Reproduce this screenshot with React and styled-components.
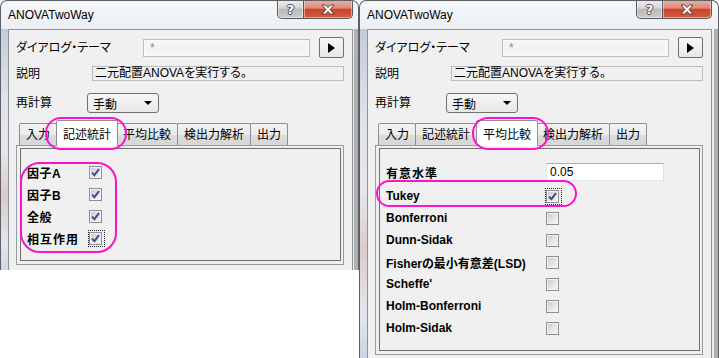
import React from 'react'
import styled, { createGlobalStyle } from 'styled-components'

const GlobalStyle = createGlobalStyle`
  html, body {
    margin: 0;
    padding: 0;
    background: #fff;
  }
  body {
    font-family: 'Liberation Sans', 'Noto Sans CJK JP', sans-serif;
    font-size: 12px;
    color: #000;
    font-feature-settings: 'palt';
  }
  * {
    box-sizing: border-box;
  }
`

const Page = styled.div`
  display: flex;
  align-items: flex-start;
  width: 719px;
  height: 358px;
  overflow: hidden;
`

const Window = styled.div`
  position: relative;
  flex: none;
  display: flex;
  flex-direction: column;
  width: ${p => p.$width}px;
  height: ${p => p.$height}px;
  padding: 0 ${p => p.$width - 354}px 0 7px;
  border: 1px solid #5d6166;
  border-bottom: none;
  border-radius: 7px 7px 0 0;
  overflow: hidden;
  background:
    linear-gradient(
        to bottom,
        #c3cbd9 0%,
        #dfe3ea 25%,
        #e7e7ea 45%,
        #dccacd 62%,
        #e3e6ec 80%,
        #bdc6dc 100%
      )
      left 0 top 28px / 7px 100% no-repeat,
    linear-gradient(#b0b0b0, #b0b0b0) right 0 top 28px / 4px 100% no-repeat,
    linear-gradient(to bottom, #f5f7f9 0, #eceff3 28px, #e9ecf0 100%);
`

const TitleBar = styled.div`
  display: flex;
  align-items: flex-start;
  height: 28px;
  flex: none;
`

const Title = styled.div`
  flex: 1;
  padding-top: 6px;
  line-height: 16px;
  font-size: 12px;
`

const CaptionButton = styled.div`
  width: ${p => p.$w}px;
  height: 19px;
  margin-top: -1px;
  display: flex;
  align-items: center;
  justify-content: center;
  border: 1px solid #55595e;
  border-top: none;
  border-left: ${p => (p.$close ? 'none' : '1px solid #55595e')};
  border-radius: ${p => (p.$close ? '0 0 5px 0' : '0 0 0 5px')};
  background: ${p =>
    p.$close
      ? 'linear-gradient(to bottom, #eab1a4 0%, #dc8a78 45%, #c9452c 52%, #d35a40 100%)'
      : 'linear-gradient(to bottom, #eeeeee 0%, #d6d6d6 45%, #b9b9b9 52%, #cdcdcd 100%)'};
  box-shadow: inset 0 0 0 1px rgba(255, 255, 255, 0.45);
`

const HelpGlyph = styled.span`
  font-family: 'DejaVu Sans', sans-serif;
  font-weight: bold;
  font-size: 13px;
  line-height: 13px;
  color: #fff;
  text-shadow: 1px 0 0 #4c4c4c, -1px 0 0 #4c4c4c, 0 1px 0 #4c4c4c, 0 -1px 0 #4c4c4c;
`

const Client = styled.div`
  flex: 1;
  display: flex;
  flex-direction: column;
  background: #f0f0f0;
  border: 1px solid #8d9298;
  border-bottom: none;
  padding: 7px 8px 0 7px;
`

const Row = styled.div`
  display: flex;
  align-items: center;
  height: ${p => p.$h}px;
  margin-top: ${p => p.$mt || 0}px;
`

const Label = styled.div`
  flex: none;
  width: ${p => p.$w}px;
  font-size: 12px;
  line-height: 16px;
  white-space: nowrap;
`

const ThemeInput = styled.div`
  flex: 1;
  height: 18px;
  padding-left: 6px;
  line-height: 16px;
  color: #8a8a8a;
  font-size: 12px;
  background: #f4f4f4;
  border: 1px solid #bdbdbd;
  box-shadow: inset 0 0 0 1px #fafafa;
`

const ArrowButton = styled.div`
  flex: none;
  width: 25px;
  height: 21px;
  margin-left: 9px;
  display: flex;
  align-items: center;
  justify-content: center;
  border: 1px solid #707070;
  border-radius: 2px;
  background: linear-gradient(to bottom, #f8f8f8, #e6e6e6);
`

const StaticField = styled.div`
  flex: 1;
  height: 15px;
  padding-left: 2px;
  line-height: 13px;
  font-size: 12px;
  border: 1px solid #bcbcbc;
  background: #f0f0f0;
  white-space: nowrap;
`

const Select = styled.div`
  flex: none;
  width: 72px;
  height: 20px;
  display: flex;
  align-items: center;
  justify-content: space-between;
  padding: 0 6px 0 5px;
  border: 1px solid #707070;
  border-radius: 3px;
  background: linear-gradient(to bottom, #f7f7f7, #e8e8e8);
  font-size: 12px;
`

const TabStrip = styled.div`
  display: flex;
  align-items: flex-end;
  height: 25px;
  margin-top: 7px;
  padding-left: 3px;
`

const Tab = styled.div`
  position: relative;
  flex: none;
  height: ${p => (p.$active ? 26 : 22)}px;
  margin: 0 ${p => (p.$active ? -1 : 0)}px ${p => (p.$active ? -1 : 0)}px -1px;
  padding: ${p => (p.$active ? 6 : 3)}px 6px 0;
  z-index: ${p => (p.$active ? 1 : 0)};
  font-size: 12px;
  line-height: 16px;
  white-space: nowrap;
  border: 1px solid #8c8e94;
  border-bottom: none;
  border-radius: 2px 2px 0 0;
  background: ${p =>
    p.$active ? '#ffffff' : 'linear-gradient(to bottom, #f3f3f3 0%, #ebebeb 50%, #dcdcdc 52%, #d6d6d6 100%)'};

  &:first-child {
    margin-left: 0;
  }
`

const Panel = styled.div`
  display: flex;
  height: ${p => p.$h}px;
  padding: 2px 2px 3px 3px;
  border: 1px solid #999a9e;
`

const Group = styled.div`
  flex: 1;
  display: flex;
  flex-direction: column;
  padding: 12px 0 0 6px;
  border: 1px solid #6f6f6f;
`

const OptionRow = styled.div`
  display: flex;
  align-items: center;
  height: 22px;
  margin-bottom: ${p => p.$mb || 0}px;
`

const OptionLabel = styled.div`
  flex: none;
  width: ${p => p.$w}px;
  font-weight: 700;
  font-size: 12px;
  letter-spacing: ${p => p.$ls || 0}px;
  white-space: nowrap;
`

const CheckBox = styled.div`
  position: relative;
  flex: none;
  width: 13px;
  height: 13px;
  border: 1px solid #8f8f8f;
  background: linear-gradient(135deg, #c4c8ce 0%, #e2e3e6 50%, #f7f7f7 100%);
  box-shadow: inset 0 0 0 1px #f3f3f3;

  &::after {
    content: '';
    display: ${p => (p.$focus ? 'block' : 'none')};
    position: absolute;
    top: -3px;
    left: -2px;
    right: -4px;
    bottom: -3px;
    border: 1px dotted #222;
  }
`

const ValueInput = styled.div`
  flex: none;
  width: 118px;
  height: 18px;
  padding-left: 3px;
  line-height: 16px;
  font-size: 12px;
  background: #fff;
  border: 1px solid;
  border-color: #abadb3 #dbdfe6 #e3e9ef #e2e3ea;
`

const Ring = styled.div`
  position: absolute;
  left: ${p => p.$x}px;
  top: ${p => p.$y}px;
  width: ${p => p.$w}px;
  height: ${p => p.$h}px;
  border: 2.5px solid #ff10cc;
  border-radius: ${p => p.$r}px;
  pointer-events: none;
  z-index: 5;
`

const TABS = ['入力', '記述統計', '平均比較', '検出力解析', '出力']

function Check({ checked, focus }) {
  return (
    <CheckBox $focus={focus}>
      {checked && (
        <svg width="11" height="11" viewBox="0 0 11 11" style={{ display: 'block' }}>
          <path d="M2 5.6 L4.4 8.2 L9 2.2" fill="none" stroke="#3d4f8f" strokeWidth="2" />
        </svg>
      )}
    </CheckBox>
  )
}

function CloseGlyph() {
  return (
    <svg width="14" height="11" viewBox="0 0 14 11">
      <path
        d="M1 1 H4.5 L7 3.6 L9.5 1 H13 L9 5.5 L13 10 H9.5 L7 7.4 L4.5 10 H1 L5 5.5 Z"
        fill="#fff"
        stroke="#4a3a36"
        strokeWidth="0.9"
        strokeLinejoin="round"
      />
    </svg>
  )
}

function Dialog({ width, height, active, panelHeight, rings, children }) {
  return (
    <Window $width={width} $height={height}>
      <TitleBar>
        <Title>ANOVATwoWay</Title>
        <CaptionButton $w={27}>
          <HelpGlyph>?</HelpGlyph>
        </CaptionButton>
        <CaptionButton $w={49} $close>
          <CloseGlyph />
        </CaptionButton>
      </TitleBar>
      <Client>
        <Row $h={21}>
          <Label $w={127}>ダイアログ・テーマ</Label>
          <ThemeInput>*</ThemeInput>
          <ArrowButton>
            <svg width="7" height="10" viewBox="0 0 7 10">
              <path d="M0 0 L7 5 L0 10 Z" fill="#000" />
            </svg>
          </ArrowButton>
        </Row>
        <Row $h={15} $mt={8}>
          <Label $w={76}>説明</Label>
          <StaticField>二元配置ANOVAを実行する。</StaticField>
        </Row>
        <Row $h={20} $mt={12}>
          <Label $w={71}>再計算</Label>
          <Select>
            <span>手動</span>
            <svg width="8" height="4" viewBox="0 0 8 4">
              <path d="M0 0 H8 L4 4 Z" fill="#000" />
            </svg>
          </Select>
        </Row>
        <TabStrip>
          {TABS.map(t => (
            <Tab key={t} $active={t === active}>
              {t}
            </Tab>
          ))}
        </TabStrip>
        <Panel $h={panelHeight}>
          <Group>{children}</Group>
        </Panel>
      </Client>
      {rings.map((r, i) => (
        <Ring key={i} $x={r[0]} $y={r[1]} $w={r[2]} $h={r[3]} $r={r[4]} />
      ))}
    </Window>
  )
}

const FACTORS = [
  { label: '因子A', ls: 0.5 },
  { label: '因子B', ls: 0.5 },
  { label: '全般', ls: 0.5 },
  { label: '相互作用', ls: 1, focus: true },
]

const METHODS = [
  { label: 'Tukey', checked: true, focus: true },
  { label: 'Bonferroni' },
  { label: 'Dunn-Sidak' },
  { label: 'Fisherの最小有意差(LSD)' },
  { label: "Scheffe'" },
  { label: 'Holm-Bonferroni' },
  { label: 'Holm-Sidak' },
]

export default function App() {
  return (
    <>
      <GlobalStyle />
      <Page>
        <Dialog
          width={359}
          height={270}
          active="記述統計"
          panelHeight={120}
          rings={[
            [44, 116, 82, 33, 16],
            [19, 161, 97, 91, 20],
          ]}
        >
          {FACTORS.map(f => (
            <OptionRow key={f.label}>
              <OptionLabel $w={62} $ls={f.ls}>
                {f.label}
              </OptionLabel>
              <Check checked focus={f.focus} />
            </OptionRow>
          ))}
        </Dialog>
        <Dialog
          width={360}
          height={358}
          active="平均比較"
          panelHeight={210}
          rings={[
            [112, 116, 77, 33, 16],
            [16, 179, 201, 27, 14],
          ]}
        >
          <OptionRow $mb={2}>
            <OptionLabel $w={160} $ls={1}>
              有意水準
            </OptionLabel>
            <ValueInput>0.05</ValueInput>
          </OptionRow>
          {METHODS.map(m => (
            <OptionRow key={m.label}>
              <OptionLabel $w={160}>{m.label}</OptionLabel>
              <Check checked={m.checked} focus={m.focus} />
            </OptionRow>
          ))}
        </Dialog>
      </Page>
    </>
  )
}
